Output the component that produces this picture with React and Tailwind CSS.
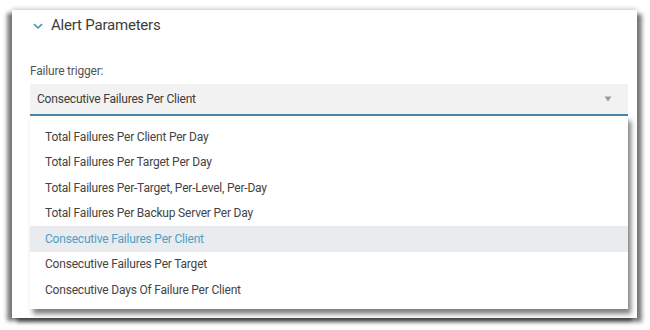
import React from 'react';

const options = [
  'Total Failures Per Client Per Day',
  'Total Failures Per Target Per Day',
  'Total Failures Per-Target, Per-Level, Per-Day',
  'Total Failures Per Backup Server Per Day',
  'Consecutive Failures Per Client',
  'Consecutive Failures Per Target',
  'Consecutive Days Of Failure Per Client',
];

const selected = 'Consecutive Failures Per Client';

export default function App() {
  return (
    <div className="w-[650px] h-[330px] bg-white overflow-hidden pt-[10px] pl-[12px]" style={{ fontFamily: 'Roboto, "Noto Sans", sans-serif' }}>
      <div className="relative w-[625px] h-[308px] bg-white shadow-[-5px_3px_4px_rgba(0,0,0,0.5),5px_4px_4px_rgba(0,0,0,0.5),0_-2px_4px_rgba(0,0,0,0.15)]">
        <div className="flex items-center h-[31px] pl-[21px] gap-[8px]">
          <svg width="10" height="7" viewBox="0 0 10 7" className="mt-[1px]">
            <path d="M1 1.2 L5 5 L9 1.2" fill="none" stroke="#3a9cb0" strokeWidth="1.6" />
          </svg>
          <span className="text-[15px] text-[#3c3c3c] tracking-[-0.2px]">Alert Parameters</span>
        </div>

        <div className="pl-[18px] pr-[9px] pt-[22px]">
          <div className="text-[12px] tracking-[-0.2px] text-[#555] leading-[16px]">Failure trigger:</div>
          <div className="relative mt-[5px]">
            <div className="flex items-center justify-between h-[32px] bg-[#f2f2f2] border-b-2 border-[#4a86a8] pl-[7px] pr-[16px]">
              <span className="text-[12px] tracking-[-0.2px] text-[#3c3c3c]">{selected}</span>
              <svg width="8" height="6" viewBox="0 0 8 6">
                <path d="M0.5 0.5 L7.5 0.5 L4 5.5 Z" fill="#9a9a9a" />
              </svg>
            </div>
            <ul className="absolute left-0 right-0 top-full bg-white pt-[8px] pb-[6px] shadow-[3px_5px_5px_rgba(0,0,0,0.5)]">
              {options.map((o) => (
                <li
                  key={o}
                  className={`h-[25.5px] flex items-center pl-[15px] text-[12px] tracking-[-0.2px] ${o === selected ? 'bg-[#e9ebee] text-[#4d9fc6]' : 'text-[#444]'}`}
                >
                  {o}
                </li>
              ))}
            </ul>
          </div>
        </div>
      </div>
    </div>
  );
}
